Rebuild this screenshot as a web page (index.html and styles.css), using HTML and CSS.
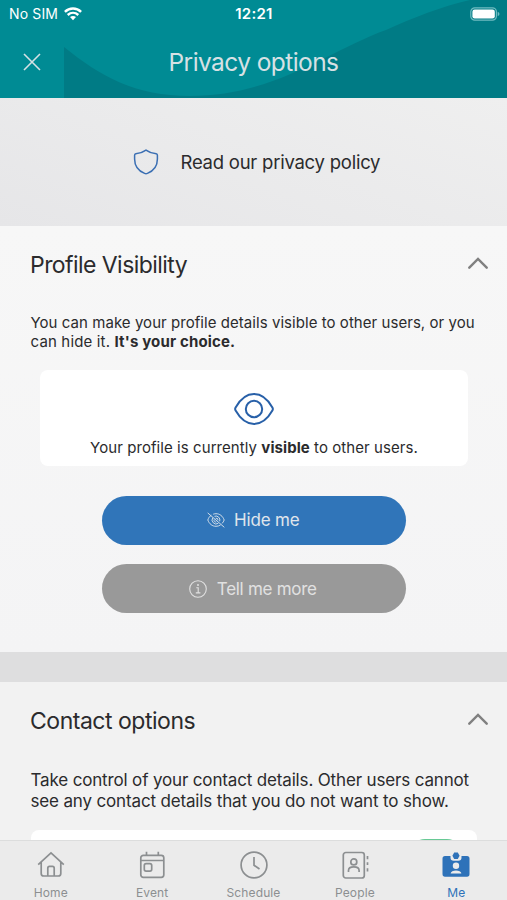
FILE: index.html
```html
<!DOCTYPE html>
<html lang="en">
<head>
<meta charset="utf-8">
<title>Privacy options</title>
<link rel="stylesheet" href="styles.css">
</head>
<body>
<div class="app">
  <header class="header">
    <svg class="header-wave" viewBox="0 0 507 98" aria-hidden="true"><path d="M64 47C100 76 135 96 190 96C275 96 330 50 386 30C415 17 440 7 470 0H507V98H64Z"/></svg>
    <div class="status">
      <div class="carrier"><span>No SIM</span>
        <svg width="18" height="14" viewBox="0 0 18 14" fill="none" stroke="#fff" stroke-width="2.4"><path d="M.9 4.800C5.500.3 12.500.3 17.100 4.800"/><path d="M3.700 8C6.800 5.100 11.200 5.100 14.300 8"/><path d="M6 10.100C7.800 8.600 10.200 8.600 12 10.100L9 13.300Z" fill="#fff" stroke="none"/></svg>
      </div>
      <time class="clock">12:21</time>
      <svg class="battery" width="30" height="14" viewBox="0 0 30 14"><rect x=".8" y=".8" width="25.6" height="12.4" rx="4" fill="none" stroke="#70bcc1" stroke-width="1.2"/><rect x="2.4" y="2.4" width="22.4" height="9.2" rx="2.3" fill="#fff"/><path d="M27.7 4.8q1.8.8 1.8 2.2t-1.8 2.2Z" fill="#70bcc1"/></svg>
    </div>
    <div class="titlebar">
      <svg class="close" width="18" height="18" viewBox="0 0 18 18"><path d="M1 1L17 17M17 1L1 17"/></svg>
      <h1>Privacy options</h1>
    </div>
  </header>
  <main class="content">
    <a class="policy">
      <svg width="26" height="26" viewBox="0 0 26 26"><path d="M13 1.2C16 3.4 19.4 4.5 23.2 4.8Q24.4 5 24.4 6.3V10C24.4 16.8 20.4 22 14.4 24.4Q13 25 11.6 24.4C5.6 22 1.6 16.8 1.6 10V6.3Q1.6 5 2.8 4.8C6.6 4.5 10 3.4 13 1.2Z"/></svg>
      <span>Read our privacy policy</span>
    </a>
    <section class="panel profile">
      <div class="panel-head"><h2 class="t-profile">Profile Visibility</h2>
        <svg class="chevron" width="20" height="12" viewBox="0 0 20 12"><path d="M1.3 10.7L10 2L18.7 10.7"/></svg></div>
      <p class="intro">You can make your profile details visible to other users, or you<br><span class="line-b">can hide it. <b>It's your choice.</b></span></p>
      <div class="card">
        <svg width="40" height="32" viewBox="0 0 40 32"><path d="M1.6 14.4C6.5 5.8 12.8 1 20 1S33.500 5.800 38.400 14.400Q39.300 16 38.400 17.600C33.500 26.200 27.200 31 20 31S6.500 26.200 1.600 17.600Q.7 16 1.600 14.400Z"/><circle cx="20" cy="16" r="8.200"/></svg>
        <p>Your profile is currently <b>visible</b> to other users.</p>
      </div>
      <button class="btn btn-hide"><svg width="18" height="16" viewBox="0 0 18 16"><path d="M4.300 3.200C2.700 4.300 1.500 5.900.8 8C2.300 12 5.300 14.300 9 14.300C10.700 14.300 12.300 13.800 13.600 12.900M6.200 2.200C7.100 1.900 8 1.700 9 1.700C12.700 1.700 15.700 4 17.200 8C16.700 9.400 16 10.500 15.100 11.400M5.800 5.700A4 4 0 0 0 11.300 11.300M7.500 4.300A4 4 0 0 1 12.700 9.300M8.700 6.200A2 2 0 0 1 11 8.300M7 7.600A2 2 0 0 0 9.300 10M.7.900L17.300 15.300"/></svg><span>Hide me</span></button>
      <button class="btn btn-more"><svg width="18" height="18" viewBox="0 0 18 18"><circle cx="9" cy="9" r="8.300"/><path d="M7.300 7.800H9.200V12.700M6.800 12.900H11.400"/><circle class="dot" cx="9" cy="5" r="1"/></svg><span>Tell me more</span></button>
    </section>
    <section class="panel contact">
      <div class="panel-head"><h2 class="t-contact">Contact options</h2>
        <svg class="chevron" width="20" height="12" viewBox="0 0 20 12"><path d="M1.300 10.700L10 2L18.700 10.700"/></svg></div>
      <p class="intro">Take control of your contact details. Other users cannot<br>see any contact details that you do not want to show.</p>
      <div class="options"><div class="toggle"></div></div>
    </section>
  </main>
  <nav class="tabs">
    <a class="tab"><svg viewBox="0 0 28 28"><path d="M1.200 13.600L14 1.800L26.800 13.600M4.200 11V22.500Q4.200 25 6.700 25H21.300Q23.800 25 23.800 22.500V11M10.800 25V17.200Q10.800 15.400 12.500 15.400H15.500Q17.200 15.400 17.200 17.200V25"/></svg><span>Home</span></a>
    <a class="tab"><svg viewBox="0 0 28 28"><rect x="2.800" y="4.300" width="23" height="22" rx="2.500"/><path d="M2.800 9.500H25.800M8.500 .8V4.300M20.300 .8V4.300"/><rect x="6.300" y="12.700" width="7.400" height="7.400" rx="1.800"/></svg><span>Event</span></a>
    <a class="tab"><svg viewBox="0 0 28 28"><circle cx="14" cy="14" r="12.900"/><path d="M14 6V14.300L19.500 18"/></svg><span>Schedule</span></a>
    <a class="tab"><svg viewBox="0 0 28 28"><rect x="2.300" y="1.500" width="21" height="25.500" rx="2.500"/><circle cx="12.800" cy="10.900" r="3"/><path d="M7.500 21V19.500C7.500 14.700 18.100 14.700 18.100 19.500V21M26.500 5V8.200M26.500 11.200V14M26.500 17.200V20.500"/></svg><span>People</span></a>
    <a class="tab active"><svg viewBox="0 0 28 28"><path class="solid" d="M3 5H8.500V6.500Q8.500 9.700 11.700 9.700H16.300Q19.500 9.700 19.500 6.500V5H25Q27.500 5 27.500 7.500V23Q27.500 25.700 25 25.700H3Q.5 25.700 .5 23V7.500Q.5 5 3 5Z"/><path class="solid" d="M12.200 1.400H15.800L17.600 4.800L15.800 8.100H12.200L10.400 4.800Z"/><circle class="cut" cx="14" cy="14.800" r="3.200"/><path class="cut" d="M8.600 22.600C8.800 18.300 19.200 18.300 19.400 22.600Z"/></svg><span>Me</span></a>
  </nav>
</div>
</body>
</html>
```

FILE: styles.css
```css
* { box-sizing: border-box; }
body { margin: 0; font-family: Inter, "Liberation Sans", sans-serif; color: #2b2b2d; }
h1, h2, p { margin: 0; font-weight: 400; }
b { font-weight: 700; }
svg { display: block; flex: none; }
.app { width: 507px; height: 900px; display: flex; flex-direction: column; overflow: hidden; }

.header { position: relative; flex: none; height: 98px; background: #008b94; }
.header-wave { position: absolute; inset: 0; width: 507px; height: 98px; fill: #007b85; }
.status { position: relative; display: grid; grid-template-columns: 1fr auto 1fr; align-items: center; height: 27px; padding: 0 7px 0 9px; color: #fff; }
.carrier { display: flex; align-items: center; gap: 6px; font-size: 14px; line-height: 18px; letter-spacing: .15px; }
.clock { margin-right: 1px; font-size: 15px; font-weight: 600; letter-spacing: .25px; }
.battery { justify-self: end; }
.titlebar { position: relative; display: grid; grid-template-columns: 64px 1fr 64px; align-items: center; height: 70px; color: #d6e1e4; }
.close { margin-left: 22.500px; fill: none; stroke: #d6e1e4; stroke-width: 1.600; }
.titlebar h1 { text-align: center; font-size: 24.500px; letter-spacing: -.57px; }

.content { flex: 1; min-height: 0; overflow: hidden; background: #dededf; }
.policy { height: 128px; display: flex; align-items: center; gap: 21.500px; padding-left: 133px; background: linear-gradient(20deg, #e6e6e8, #efefef); font-size: 18.500px; letter-spacing: -.24px; white-space: nowrap; }
.policy svg { fill: none; stroke: #3b6fb3; stroke-width: 1.500; }
.panel { display: flex; flex-direction: column; }
.profile { height: 426px; margin-bottom: 30px; background: linear-gradient(#f7f7f7, #f4f4f5); }
.contact { height: 300px; background: #f2f2f2; }
.panel-head { display: flex; align-items: center; justify-content: space-between; height: 78px; padding: 0 19.500px 0 30px; }
.panel-head h2 { font-size: 23px; }
.t-profile { letter-spacing: -.56px; }
.t-contact { letter-spacing: -.48px; }
.chevron { margin-bottom: 4px; fill: none; stroke: #808080; stroke-width: 2.400; stroke-linecap: round; }
.intro { padding-left: 30.500px; white-space: nowrap; }
.profile .intro { margin-top: 10px; font-size: 15px; line-height: 18.500px; letter-spacing: .05px; }
.profile .line-b { letter-spacing: .16px; }
.card { height: 96px; margin: 19px 39px 0 40px; padding-top: 23px; display: flex; flex-direction: column; align-items: center; background: #fff; border-radius: 8px; }
.card svg { fill: none; stroke: #2860a8; stroke-width: 2; }
.card p { margin-top: 13px; font-size: 15px; line-height: 20px; letter-spacing: .07px; white-space: nowrap; }
.btn { width: 304px; height: 49px; margin: 0 0 0 102px; padding: 0 2px 1px 0; display: flex; align-items: center; justify-content: center; gap: 9.500px; border: 0; border-radius: 25px; color: #e0e6ec; font: 400 17px Inter, sans-serif; letter-spacing: -.2px; }
.btn svg { fill: none; stroke: currentColor; stroke-width: 1.100; }
.btn .dot { fill: currentColor; stroke: none; }
.btn-hide { margin-top: 30px; background: #3075b9; }
.btn-hide svg { stroke-width: .9; }
.btn-more { margin-top: 19px; padding-bottom: 0; background: #999; color: #e1e1e1; letter-spacing: -.28px; }
.contact .intro { margin-top: 10px; font-size: 17px; line-height: 21px; letter-spacing: -.155px; }
.options { margin: 18px 30px 0 31px; height: 80px; border-radius: 8px; background: #fff; display: flex; justify-content: flex-end; }
.toggle { width: 52px; height: 30px; margin: 9px 15px 0 0; border-radius: 15px; background: #67c995; }

.tabs { flex: none; height: 60px; display: flex; background: #ebebeb; border-top: 1px solid #dcdddd; }
.tab { flex: 1; display: flex; flex-direction: column; align-items: center; padding-top: 10px; color: #8c8f91; font-size: 12px; line-height: 16px; letter-spacing: .12px; }
.tab svg { width: 28px; height: 28px; margin-bottom: 6px; fill: none; stroke: currentColor; stroke-width: 1.700; }
.active { color: #2e72b9; }
.tab .solid { fill: currentColor; stroke: none; }
.tab .cut { fill: #ebebeb; stroke: none; }
```
